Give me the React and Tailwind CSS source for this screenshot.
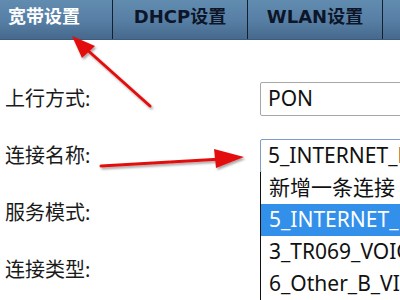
const tabs = [
  { label: "宽带设置", active: true, w: "w-[113px]" },
  { label: "DHCP设置", w: "w-[135px]" },
  { label: "WLAN设置", w: "w-[135px]" },
  { label: "", w: "flex-1" },
];

const options = ["新增一条连接", "5_INTERNET_R_VID_", "3_TR069_VOICE_R", "6_Other_B_VID_"];

const Arrows = () => (
  <svg className="absolute inset-0 pointer-events-none" width="400" height="300" viewBox="0 0 400 300">
    <defs>
      <filter id="sh" x="-20%" y="-20%" width="140%" height="140%">
        <feDropShadow dx="1.5" dy="2" stdDeviation="1.2" floodColor="#000" floodOpacity="0.35" />
      </filter>
    </defs>
    <g filter="url(#sh)" fill="#e3100f" stroke="#e3100f">
      <line x1="150" y1="106" x2="84" y2="47" strokeWidth="3" strokeLinecap="round" />
      <polygon points="72,36 95,46 82,58" stroke="none" />
      <line x1="101" y1="166" x2="222" y2="159" strokeWidth="3" strokeLinecap="round" />
      <polygon points="244,157 214,149 216,168" stroke="none" />
    </g>
  </svg>
);

const Row = ({ label, children }) => (
  <div className="flex h-[57px] items-center">
    <div className="w-[260px] shrink-0 pl-[5px] text-[20px] text-[#1a1a1a]">{label}</div>
    {children}
  </div>
);

export default function App() {
  return (
    <div
      className="relative w-[400px] h-[300px] overflow-hidden bg-white"
      style={{ fontFamily: '"Noto Sans", "Noto Sans CJK SC", sans-serif' }}
    >
      <div className="flex h-10 bg-gradient-to-b from-[#628bb0] via-[#5880a6] to-[#46698c] border-b border-[#3d5c7c]">
        {tabs.map((t, i) => (
          <div
            key={i}
            className={`${t.w} flex items-center pb-[7px] ${i === 0 ? "pl-[8px]" : "justify-center"} ${
              i < tabs.length - 1 ? "border-r border-[#16202c]" : ""
            } ${t.active ? "text-white" : "text-[#0c1628]"} text-[18px] font-bold`}
            style={{ fontFamily: '"DejaVu Sans", "Noto Sans CJK SC", sans-serif' }}
          >
            {t.label}
          </div>
        ))}
      </div>

      <div className="mt-[30px] flex flex-col">
        <Row label="上行方式:">
          <div className="h-[34px] w-[160px] shrink-0 flex items-center pl-[7px] border border-[#a7a7a7] rounded-[2px] text-[21px] text-[#111]">
            PON
          </div>
        </Row>
        <Row label="连接名称:">
          <div className="relative h-[34px] w-[160px] shrink-0 flex items-center pl-[7px] border border-[#7b9dc9] rounded-[2px] text-[21px] text-[#111] whitespace-nowrap">
            5_INTERNET_R
            <div className="absolute top-full -left-px w-[160px] bg-white border-l border-[#111] text-[21px]">
              {options.map((o, i) => (
                <div
                  key={i}
                  className={`h-8 flex items-center pl-[8px] whitespace-nowrap ${
                    i === 1 ? "bg-[#3290ea] text-white" : "text-[#111]"
                  }`}
                >
                  {o}
                </div>
              ))}
            </div>
          </div>
        </Row>
        <Row label="服务模式:" />
        <Row label="连接类型:" />
      </div>

      <Arrows />
    </div>
  );
}
